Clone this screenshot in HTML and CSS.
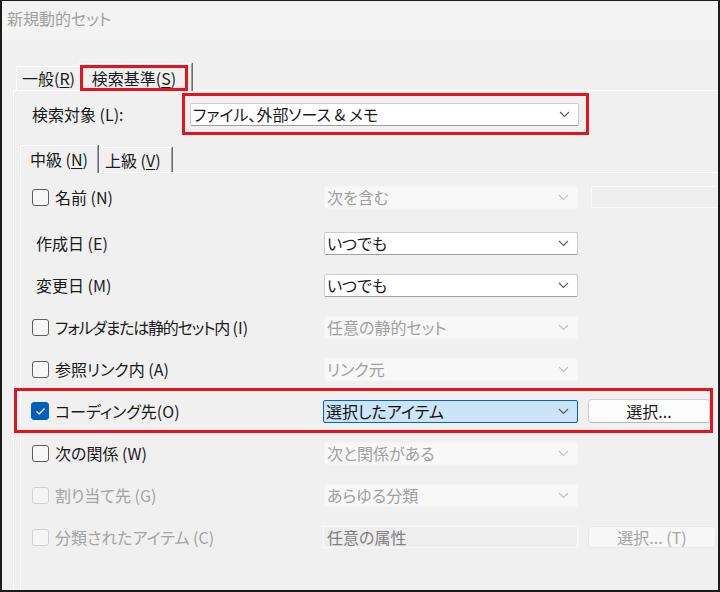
FILE: index.html
```html
<html>
<head>
    <link rel="stylesheet" href="styles.css">
</head>
<body>
    <div class="window">
        <div class="titlebar">新規動的セット</div>
        <div class="content">
            <div class="tabs">
                <div class="tab">一般(<u>R</u>)</div>
                <div class="tab tab-active"><span class="mark">検索基準(<u>S</u>)</span></div>
            </div>
            <div class="panel">
                <div class="target-row">
                    <span class="target-label">検索対象 (L):</span>
                    <div class="mark-box">
                        <div class="combo combo-target">ファイル、外部ソース &amp; メモ
                            <svg class="chev" width="11" height="7" viewBox="0 0 11 7"><polyline points="1,1 5.5,5.5 10,1"/></svg>
                        </div>
                    </div>
                </div>
                <div class="subtabs">
                    <div class="subtab subtab-active">中級 (<u>N</u>)</div>
                    <div class="subtab">上級 (<u>V</u>)</div>
                </div>
                <div class="subpanel">
                    <div class="row row-first">
                        <label class="field"><span class="check"></span>名前 (N)</label>
                        <div class="combo combo-off">次を含む
                            <svg class="chev" width="11" height="7" viewBox="0 0 11 7"><polyline points="1,1 5.5,5.5 10,1"/></svg>
                        </div>
                        <div class="textbox-off"></div>
                    </div>
                    <div class="row">
                        <span class="field field-plain">作成日 (E)</span>
                        <div class="combo">いつでも
                            <svg class="chev" width="11" height="7" viewBox="0 0 11 7"><polyline points="1,1 5.5,5.5 10,1"/></svg>
                        </div>
                    </div>
                    <div class="row">
                        <span class="field field-plain">変更日 (M)</span>
                        <div class="combo">いつでも
                            <svg class="chev" width="11" height="7" viewBox="0 0 11 7"><polyline points="1,1 5.5,5.5 10,1"/></svg>
                        </div>
                    </div>
                    <div class="row">
                        <label class="field"><span class="check"></span><span><span class="tight">フォルダまたは静的セット内</span> (I)</span></label>
                        <div class="combo combo-off">任意の静的セット
                            <svg class="chev" width="11" height="7" viewBox="0 0 11 7"><polyline points="1,1 5.5,5.5 10,1"/></svg>
                        </div>
                    </div>
                    <div class="row">
                        <label class="field"><span class="check"></span>参照リンク内 (A)</label>
                        <div class="combo combo-off">リンク元
                            <svg class="chev" width="11" height="7" viewBox="0 0 11 7"><polyline points="1,1 5.5,5.5 10,1"/></svg>
                        </div>
                    </div>
                    <div class="row row-marked">
                        <label class="field"><span class="check check-on">
                            <svg width="11" height="9" viewBox="0 0 11 9"><polyline points="1.5,4.5 4.2,7 9.5,1.5"/></svg>
                        </span>コーディング先(O)</label>
                        <div class="combo combo-selected">選択したアイテム
                            <svg class="chev" width="11" height="7" viewBox="0 0 11 7"><polyline points="1,1 5.5,5.5 10,1"/></svg>
                        </div>
                        <div class="button">選択...</div>
                    </div>
                    <div class="row">
                        <label class="field"><span class="check"></span>次の関係 (W)</label>
                        <div class="combo combo-off">次と関係がある
                            <svg class="chev" width="11" height="7" viewBox="0 0 11 7"><polyline points="1,1 5.5,5.5 10,1"/></svg>
                        </div>
                    </div>
                    <div class="row">
                        <label class="field field-off"><span class="check check-off"></span>割り当て先 (G)</label>
                        <div class="combo combo-off">あらゆる分類
                            <svg class="chev" width="11" height="7" viewBox="0 0 11 7"><polyline points="1,1 5.5,5.5 10,1"/></svg>
                        </div>
                    </div>
                    <div class="row">
                        <label class="field field-off"><span class="check check-off"></span>分類されたアイテム (C)</label>
                        <div class="textbox-attr">任意の属性</div>
                        <div class="button button-off">選択... (T)</div>
                    </div>
                </div>
            </div>
        </div>
    </div>
</body>
</html>
```

FILE: styles.css
```css
body {
    margin: 0;
    background-color: #f0f0f0;
    font-family: "Noto Sans CJK JP", "Noto Sans", sans-serif;
    font-feature-settings: "palt";
    font-size: 16px;
    line-height: 20px;
    color: #1a1a1a;
}
u {
    text-decoration-thickness: 1px;
    text-underline-offset: 2px;
}
.window {
    width: 720px;
    height: 592px;
    box-sizing: border-box;
    border: 2px solid #1c1c1c;
    border-top-width: 1px;
    display: flex;
    flex-direction: column;
    overflow: hidden;
}
.titlebar {
    height: 39px;
    box-sizing: border-box;
    padding: 7px 0 0 5px;
    background-color: #f3f3f3;
    color: #a0a0a0;
    font-size: 16px;
}
.content {
    flex: 1;
    display: flex;
    flex-direction: column;
    background-color: #f0f0f0;
}

/* top tabs */
.tabs {
    display: flex;
    align-items: flex-end;
    height: 27px;
    margin-top: 23px;
    padding-left: 14px;
}
.tab {
    box-sizing: border-box;
    width: 64px;
    height: 24px;
    padding-left: 5px;
    border-left: 1px solid #fff;
    border-top: 1px solid #fff;
    line-height: 22px;
}
.tab-active {
    position: relative;
    z-index: 1;
    width: 113px;
    height: 28px;
    margin-left: -1px;
    margin-bottom: -1px;
    padding: 1px 0 0 0;
    background-color: #f0f0f0;
    border-right: 1px solid #a0a0a0;
    box-shadow: 1px 0 0 #6d6d6d;
}
.mark {
    display: flex;
    justify-content: center;
    align-items: center;
    box-sizing: border-box;
    width: 108px;
    height: 26px;
    border: 3px solid #e3141f;
}
.panel {
    flex: 1;
    display: flex;
    flex-direction: column;
    margin-left: 11px;
    border-top: 1px solid #fff;
    border-left: 1px solid #fff;
}

/* search target */
.target-row {
    display: flex;
    align-items: center;
    height: 42px;
    margin-top: 2px;
    padding-left: 18px;
}
.target-label {
    width: 150px;
}
.mark-box {
    box-sizing: border-box;
    width: 407px;
    height: 42px;
    border: 3px solid #e3141f;
    display: flex;
    align-items: center;
    padding-left: 5px;
}
.combo-target {
    width: 389px;
    height: 24px;
}

/* sub tabs */
.subtabs {
    display: flex;
    align-items: flex-end;
    height: 27px;
    margin: 10px 0 0 6px;
}
.subtab {
    box-sizing: border-box;
    width: 74px;
    height: 25px;
    padding-left: 6px;
    border-left: 1px solid #fff;
    border-top: 1px solid #fff;
    border-right: 1px solid #a0a0a0;
    box-shadow: 1px 0 0 #6d6d6d;
    line-height: 24px;
}
.subtab-active {
    position: relative;
    z-index: 1;
    width: 78px;
    height: 28px;
    margin-bottom: -1px;
    padding-left: 9px;
    background-color: #f0f0f0;
    line-height: 26px;
}
.subpanel {
    flex: 1;
    margin-left: 6px;
    padding-top: 3px;
    border-top: 1px solid #fff;
    border-left: 1px solid #fff;
}

/* rows */
.row {
    display: grid;
    grid-template-columns: 282px 254px 122px;
    column-gap: 10px;
    align-items: center;
    height: 42px;
    padding-left: 11px;
    position: relative;
}
.row-first {
    margin-bottom: 4px;
}
.row-marked::after {
    content: "";
    position: absolute;
    left: -7px;
    right: 5px;
    top: -2px;
    bottom: -1px;
    border: 3px solid #e3141f;
}
.field {
    display: flex;
    align-items: center;
    gap: 6px;
    white-space: nowrap;
}
.field .tight {
    letter-spacing: -1.2px;
}
.field-plain {
    padding-left: 4px;
}
.field-off {
    color: #a3a3a3;
}
.check {
    box-sizing: border-box;
    width: 17px;
    height: 17px;
    border: 1px solid #5f5f5f;
    border-radius: 3px;
    background-color: #f7f7f7;
    display: flex;
    justify-content: center;
    align-items: center;
}
.check-on {
    width: 18px;
    height: 18px;
    margin-left: -1px;
    border-color: #005fb8;
    background-color: #005fb8;
}
.check-on svg polyline {
    fill: none;
    stroke: #fff;
    stroke-width: 1.2;
}
.check-off {
    border-color: #d2d2d2;
    background-color: #f5f5f5;
}

/* combos */
.combo {
    box-sizing: border-box;
    height: 23px;
    display: flex;
    align-items: center;
    justify-content: space-between;
    padding: 0 8px 0 2px;
    background-color: #fff;
    border: 1px solid #cccccc;
    border-bottom-color: #9e9e9e;
    border-radius: 2px;
    white-space: nowrap;
}
.chev polyline {
    fill: none;
    stroke: #5a5a5a;
    stroke-width: 1.1;
}
.combo-off {
    background-color: #f8f8f8;
    border-color: #f4f4f4;
    color: #a0a0a0;
}
.combo-off .chev polyline {
    stroke: #c2c2c2;
}
.combo-selected {
    margin-left: -1px;
    background-color: #cce4f7;
    border-color: #0067c0;
    color: #111;
}
.textbox-off {
    box-sizing: border-box;
    width: 140px;
    height: 22px;
    margin-left: 3px;
    background-color: #efefef;
    border: 1px solid #fafafa;
}
.textbox-attr {
    box-sizing: border-box;
    height: 22px;
    margin-left: -1px;
    padding-left: 3px;
    background-color: #eeeeee;
    border: 1px solid #f8f8f8;
    color: #808080;
    line-height: 20px;
}

/* buttons */
.button {
    box-sizing: border-box;
    height: 24px;
    display: flex;
    justify-content: center;
    align-items: center;
    background-color: #fdfdfd;
    border: 1px solid #d0d0d0;
    border-bottom-color: #b8b8b8;
    border-radius: 4px;
}
.button-off {
    width: 128px;
    height: 22px;
    background-color: #f7f7f7;
    border-color: #e8e8e8;
    color: #a6a6a6;
}
```
